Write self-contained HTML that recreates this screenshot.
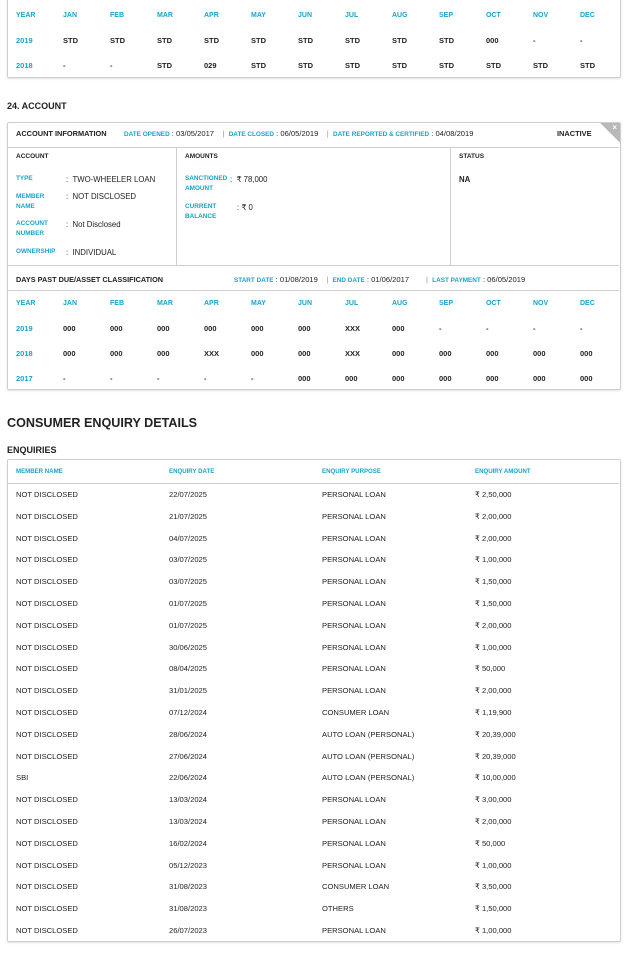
<!DOCTYPE html>
<html><head><meta charset="utf-8"><style>
*{margin:0;padding:0;box-sizing:border-box}
body{width:627px;height:966px;background:#fff;font-family:"Liberation Sans",sans-serif;color:#222;position:relative;overflow:hidden}
.a{position:absolute;white-space:nowrap}
.box{position:absolute;border:1px solid #cfcfcf;border-radius:2px;box-shadow:0 1px 2px rgba(0,0,0,.12)}
.g{display:grid;grid-template-columns:repeat(13,47px);position:absolute;left:16px;font-size:7.5px;font-weight:bold;height:25px;align-items:center}
.g.h{color:#1aa3c8;font-size:7px}
.g span:first-child{color:#1aa3c8}
.lab{font-size:6.4px;font-weight:bold;color:#1aa3c8;line-height:9.5px}
.v{font-size:7.8px}
.b{font-weight:bold}
.hl{position:absolute;left:8px;width:611px;height:1px;background:#cfcfcf}
.e{position:absolute;left:16px;font-size:7.6px;height:22px;line-height:22px;display:grid;grid-template-columns:153px 153px 153px 150px;width:610px}
</style></head><body>
<div class="box" style="left:7px;top:-10px;width:614px;height:88px"></div>
<div class="g h" style="top:3px"><span>YEAR</span><span>JAN</span><span>FEB</span><span>MAR</span><span>APR</span><span>MAY</span><span>JUN</span><span>JUL</span><span>AUG</span><span>SEP</span><span>OCT</span><span>NOV</span><span>DEC</span></div>
<div class="g" style="top:28px"><span>2019</span><span>STD</span><span>STD</span><span>STD</span><span>STD</span><span>STD</span><span>STD</span><span>STD</span><span>STD</span><span>STD</span><span>000</span><span>-</span><span>-</span></div>
<div class="g" style="top:53px"><span>2018</span><span>-</span><span>-</span><span>STD</span><span>029</span><span>STD</span><span>STD</span><span>STD</span><span>STD</span><span>STD</span><span>STD</span><span>STD</span><span>STD</span></div>

<div class="a b" style="left:7px;top:101px;font-size:9px">24. ACCOUNT</div>
<div class="box" style="left:7px;top:122px;width:614px;height:268px;overflow:hidden">
<div style="position:absolute;right:-14px;top:-14px;width:28px;height:28px;background:#b8b8b8;transform:rotate(45deg)"></div>
<div class="a" style="right:3px;top:0px;color:#fff;font-size:8px;font-weight:bold">×</div>
</div>
<div class="a b" style="left:16px;top:129px;font-size:7.4px">ACCOUNT INFORMATION</div>
<div class="a" style="left:124px;top:129px;font-size:7.6px"><span class="lab">DATE OPENED</span> : 03/05/2017 &nbsp;&nbsp;&nbsp;<span style="color:#999">|</span>&nbsp; <span class="lab">DATE CLOSED</span> : 06/05/2019 &nbsp;&nbsp;&nbsp;<span style="color:#999">|</span>&nbsp; <span class="lab">DATE REPORTED &amp; CERTIFIED</span> : 04/08/2019</div>
<div class="a b" style="left:557px;top:129px;font-size:7.4px">INACTIVE</div>
<div class="hl" style="top:147px"></div>
<div style="position:absolute;left:176px;top:147px;width:1px;height:118px;background:#cfcfcf"></div>
<div style="position:absolute;left:450px;top:147px;width:1px;height:118px;background:#cfcfcf"></div>
<div class="a b" style="left:16px;top:153px;font-size:6.5px">ACCOUNT</div>
<div class="a b" style="left:185px;top:153px;font-size:6.5px">AMOUNTS</div>
<div class="a b" style="left:459px;top:153px;font-size:6.5px">STATUS</div>
<div class="a lab" style="left:16px;top:174px">TYPE</div><div class="a v" style="left:66px;top:175px">: &nbsp;TWO-WHEELER LOAN</div>
<div class="a lab" style="left:16px;top:192px">MEMBER<br>NAME</div><div class="a v" style="left:66px;top:192px">: &nbsp;NOT DISCLOSED</div>
<div class="a lab" style="left:16px;top:219px">ACCOUNT<br>NUMBER</div><div class="a v" style="left:66px;top:220px">: &nbsp;Not Disclosed</div>
<div class="a lab" style="left:16px;top:247px">OWNERSHIP</div><div class="a v" style="left:66px;top:248px">: &nbsp;INDIVIDUAL</div>
<div class="a lab" style="left:185px;top:174px">SANCTIONED<br>AMOUNT</div><div class="a v" style="left:230px;top:175px">: &nbsp;₹ 78,000</div>
<div class="a lab" style="left:185px;top:202px">CURRENT<br>BALANCE</div><div class="a v" style="left:237px;top:203px">: ₹ 0</div>
<div class="a v b" style="left:459px;top:175px">NA</div>
<div class="hl" style="top:265px"></div>
<div class="a b" style="left:16px;top:275px;font-size:7.3px">DAYS PAST DUE/ASSET CLASSIFICATION</div>
<div class="a" style="left:234px;top:275px;font-size:7.6px"><span class="lab">START DATE</span> : 01/08/2019 &nbsp;&nbsp;&nbsp;<span style="color:#999">|</span>&nbsp; <span class="lab">END DATE</span> : 01/06/2017 &nbsp;&nbsp;&nbsp;&nbsp;&nbsp;&nbsp;&nbsp;<span style="color:#999">|</span>&nbsp; <span class="lab">LAST PAYMENT</span> : 06/05/2019</div>
<div class="hl" style="top:290px"></div>
<div class="g h" style="top:291px"><span>YEAR</span><span>JAN</span><span>FEB</span><span>MAR</span><span>APR</span><span>MAY</span><span>JUN</span><span>JUL</span><span>AUG</span><span>SEP</span><span>OCT</span><span>NOV</span><span>DEC</span></div>
<div class="g" style="top:316px"><span>2019</span><span>000</span><span>000</span><span>000</span><span>000</span><span>000</span><span>000</span><span>XXX</span><span>000</span><span>-</span><span>-</span><span>-</span><span>-</span></div>
<div class="g" style="top:341px"><span>2018</span><span>000</span><span>000</span><span>000</span><span>XXX</span><span>000</span><span>000</span><span>XXX</span><span>000</span><span>000</span><span>000</span><span>000</span><span>000</span></div>
<div class="g" style="top:366px"><span>2017</span><span>-</span><span>-</span><span>-</span><span>-</span><span>-</span><span>000</span><span>000</span><span>000</span><span>000</span><span>000</span><span>000</span><span>000</span></div>

<div class="a b" style="left:7px;top:416px;font-size:12.6px">CONSUMER ENQUIRY DETAILS</div>
<div class="a b" style="left:7px;top:445px;font-size:9px">ENQUIRIES</div>
<div class="box" style="left:7px;top:459px;width:614px;height:483px"></div>
<div class="e" style="top:461px;color:#1aa3c8;font-size:6.1px;font-weight:bold"><span>MEMBER NAME</span><span>ENQUIRY DATE</span><span>ENQUIRY PURPOSE</span><span>ENQUIRY AMOUNT</span></div>
<div class="hl" style="top:483px"></div>
<div class="e" style="top:484px"><span>NOT DISCLOSED</span><span>22/07/2025</span><span>PERSONAL LOAN</span><span>₹ 2,50,000</span></div>
<div class="e" style="top:505.8px"><span>NOT DISCLOSED</span><span>21/07/2025</span><span>PERSONAL LOAN</span><span>₹ 2,00,000</span></div>
<div class="e" style="top:527.6px"><span>NOT DISCLOSED</span><span>04/07/2025</span><span>PERSONAL LOAN</span><span>₹ 2,00,000</span></div>
<div class="e" style="top:549.4px"><span>NOT DISCLOSED</span><span>03/07/2025</span><span>PERSONAL LOAN</span><span>₹ 1,00,000</span></div>
<div class="e" style="top:571.2px"><span>NOT DISCLOSED</span><span>03/07/2025</span><span>PERSONAL LOAN</span><span>₹ 1,50,000</span></div>
<div class="e" style="top:593px"><span>NOT DISCLOSED</span><span>01/07/2025</span><span>PERSONAL LOAN</span><span>₹ 1,50,000</span></div>
<div class="e" style="top:614.8px"><span>NOT DISCLOSED</span><span>01/07/2025</span><span>PERSONAL LOAN</span><span>₹ 2,00,000</span></div>
<div class="e" style="top:636.6px"><span>NOT DISCLOSED</span><span>30/06/2025</span><span>PERSONAL LOAN</span><span>₹ 1,00,000</span></div>
<div class="e" style="top:658.4px"><span>NOT DISCLOSED</span><span>08/04/2025</span><span>PERSONAL LOAN</span><span>₹ 50,000</span></div>
<div class="e" style="top:680.2px"><span>NOT DISCLOSED</span><span>31/01/2025</span><span>PERSONAL LOAN</span><span>₹ 2,00,000</span></div>
<div class="e" style="top:702px"><span>NOT DISCLOSED</span><span>07/12/2024</span><span>CONSUMER LOAN</span><span>₹ 1,19,900</span></div>
<div class="e" style="top:723.8px"><span>NOT DISCLOSED</span><span>28/06/2024</span><span>AUTO LOAN (PERSONAL)</span><span>₹ 20,39,000</span></div>
<div class="e" style="top:745.6px"><span>NOT DISCLOSED</span><span>27/06/2024</span><span>AUTO LOAN (PERSONAL)</span><span>₹ 20,39,000</span></div>
<div class="e" style="top:767.4px"><span>SBI</span><span>22/06/2024</span><span>AUTO LOAN (PERSONAL)</span><span>₹ 10,00,000</span></div>
<div class="e" style="top:789.2px"><span>NOT DISCLOSED</span><span>13/03/2024</span><span>PERSONAL LOAN</span><span>₹ 3,00,000</span></div>
<div class="e" style="top:811px"><span>NOT DISCLOSED</span><span>13/03/2024</span><span>PERSONAL LOAN</span><span>₹ 2,00,000</span></div>
<div class="e" style="top:832.8px"><span>NOT DISCLOSED</span><span>16/02/2024</span><span>PERSONAL LOAN</span><span>₹ 50,000</span></div>
<div class="e" style="top:854.6px"><span>NOT DISCLOSED</span><span>05/12/2023</span><span>PERSONAL LOAN</span><span>₹ 1,00,000</span></div>
<div class="e" style="top:876.4px"><span>NOT DISCLOSED</span><span>31/08/2023</span><span>CONSUMER LOAN</span><span>₹ 3,50,000</span></div>
<div class="e" style="top:898.2px"><span>NOT DISCLOSED</span><span>31/08/2023</span><span>OTHERS</span><span>₹ 1,50,000</span></div>
<div class="e" style="top:920px"><span>NOT DISCLOSED</span><span>26/07/2023</span><span>PERSONAL LOAN</span><span>₹ 1,00,000</span></div>
</body></html>
